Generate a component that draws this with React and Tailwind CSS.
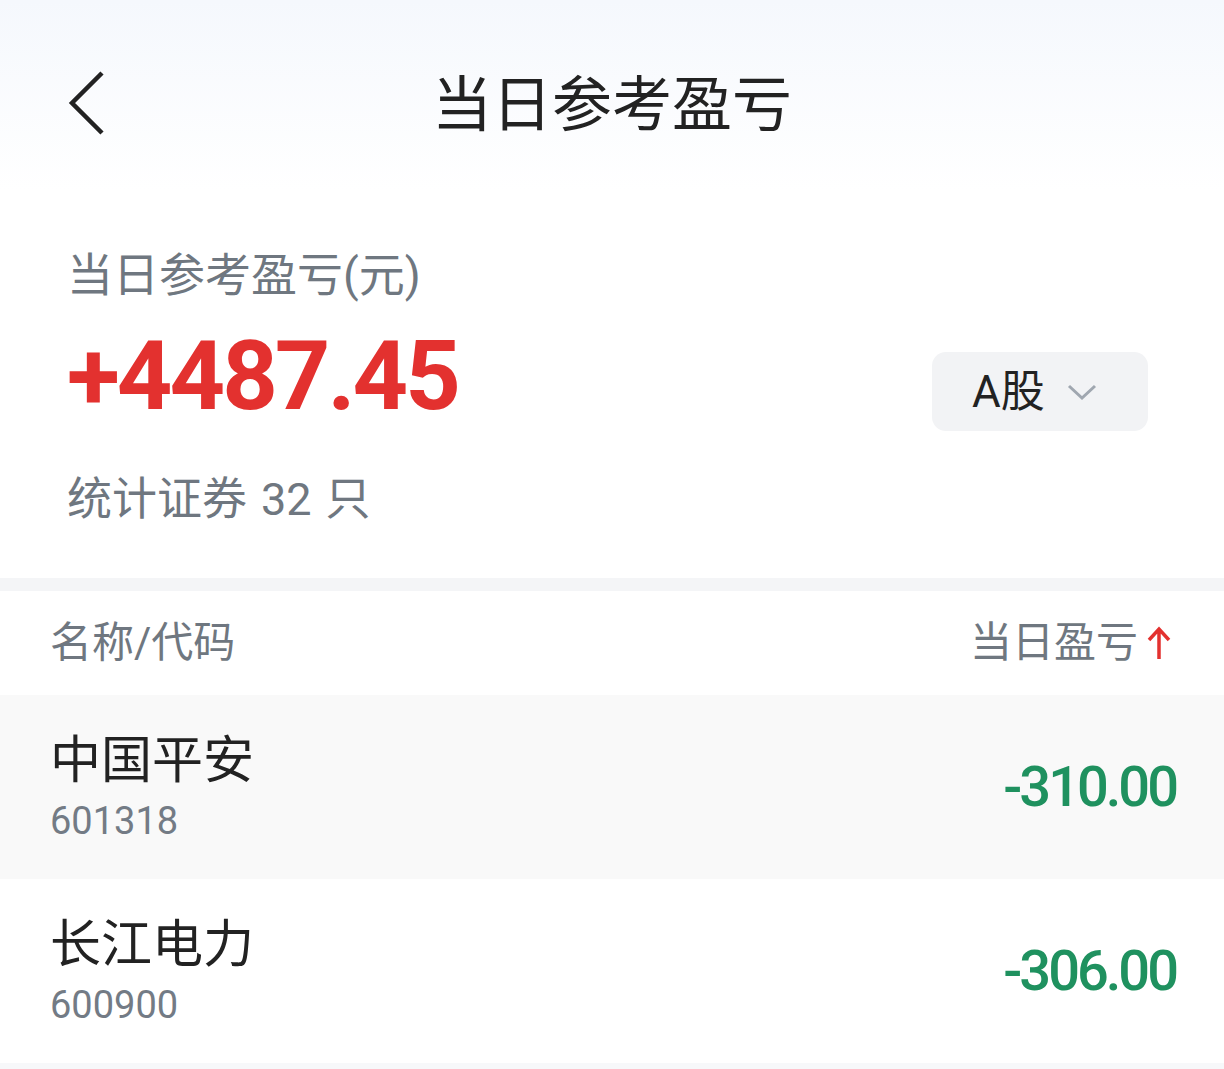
import React from "react";

const rows = [
  { name: "中国平安", code: "601318", pnl: "-310.00", shaded: true },
  { name: "长江电力", code: "600900", pnl: "-306.00", shaded: false },
];

const font = { fontFamily: "Roboto, 'Noto Sans CJK SC', sans-serif" };

export default function App() {
  return (
    <div className="w-[1224px] h-[1069px] bg-white overflow-hidden" style={font}>
      {/* header */}
      <div className="h-[190px] bg-gradient-to-b from-[#f5f8fd] to-white relative pt-[76px]">
        <div className="absolute left-[66px] top-[70px]">
          <svg width="42" height="66" viewBox="0 0 42 66" fill="none">
            <path d="M36 3 L6 33 L36 63" stroke="#222" strokeWidth="4.5" strokeLinejoin="miter" />
          </svg>
        </div>
        <div className="w-full text-center text-[60px] leading-none text-[#222]">当日参考盈亏</div>
      </div>

      {/* summary */}
      <div className="h-[388px] px-[67px] flex items-start justify-between">
        <div className="pt-[62px]">
          <div className="text-[46px] leading-none text-[#6f7780]">当日参考盈亏(元)</div>
          <div className="text-[97px] leading-none font-bold text-[#e3312f] mt-[30px] tracking-[-3px]">+4487.45</div>
          <div className="text-[45px] leading-none text-[#6f7780] mt-[52px] flex gap-[14px]">
            <span>统计证券</span>
            <span>32</span>
            <span>只</span>
          </div>
        </div>
        <div className="mt-[162px] mr-[9px] w-[216px] h-[79px] rounded-[14px] bg-[#f2f3f5] flex items-center pl-[40px]">
          <span className="text-[44px] leading-none text-[#222]">A股</span>
          <svg className="ml-[22px]" width="30" height="18" viewBox="0 0 30 18" fill="none">
            <path d="M2 3 L15 15 L28 3" stroke="#a0a7b0" strokeWidth="3" />
          </svg>
        </div>
      </div>

      <div className="h-[13px] bg-[#f4f5f7]" />

      {/* table header */}
      <div className="h-[104px] flex items-center justify-between pl-[50px] pr-[52px]">
        <span className="text-[42px] leading-none text-[#6f7780]">名称/代码</span>
        <div className="flex items-center">
          <span className="text-[42px] leading-none text-[#6f7780]">当日盈亏</span>
          <svg className="ml-[8px]" width="26" height="34" viewBox="0 0 26 34" fill="none">
            <path d="M13 33 V4 M3 14 L13 3 L23 14" stroke="#e3312f" strokeWidth="3.5" />
          </svg>
        </div>
      </div>

      {rows.map((r) => (
        <div
          key={r.code}
          className={`h-[184px] flex items-center justify-between pl-[50px] pr-[48px] ${r.shaded ? "bg-[#f9f9f9]" : "bg-white"}`}
        >
          <div className="flex flex-col">
            <span className="text-[51px] leading-none text-[#222]">{r.name}</span>
            <span className="text-[38px] leading-none text-[#737b85] mt-[16px]">{r.code}</span>
          </div>
          <span className="text-[56px] leading-none font-medium text-[#1f915f] tracking-[-3px]">{r.pnl}</span>
        </div>
      ))}
      <div className="h-[20px] bg-[#f7f8fa]" />
    </div>
  );
}
